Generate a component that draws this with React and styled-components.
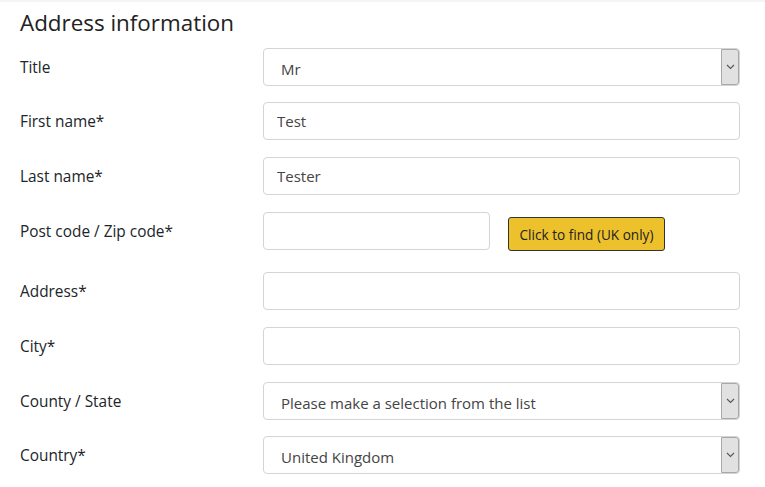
import React from 'react'
import styled, { createGlobalStyle } from 'styled-components'

const GlobalStyle = createGlobalStyle`
  body {
    margin: 0;
    background: #fff;
    font-family: "Open Sans", "Noto Sans", sans-serif;
    color: #212529;
  }
`

const rows = [
  { label: 'Title', kind: 'select', value: 'Mr', step: 54 },
  { label: 'First name*', kind: 'input', value: 'Test', step: 55 },
  { label: 'Last name*', kind: 'input', value: 'Tester', step: 55 },
  { label: 'Post code / Zip code*', kind: 'postcode', value: '', step: 60 },
  { label: 'Address*', kind: 'input', value: '', step: 55 },
  { label: 'City*', kind: 'input', value: '', step: 55 },
  { label: 'County / State', kind: 'select', value: 'Please make a selection from the list', step: 54 },
  { label: 'Country*', kind: 'select', value: 'United Kingdom', step: 50 },
]

function Field({ row }) {
  if (row.kind === 'select') {
    return (
      <SelectBox>
        <SelectText>{row.value}</SelectText>
        <Arrow>
          <svg width="9" height="6" viewBox="0 0 9 6">
            <path d="M1 1l3.5 3.5L8 1" fill="none" stroke="#555" strokeWidth="1.1" />
          </svg>
        </Arrow>
      </SelectBox>
    )
  }
  if (row.kind === 'postcode') {
    return (
      <PostWrap>
        <Input short defaultValue="" />
        <FindButton>Click to find (UK only)</FindButton>
      </PostWrap>
    )
  }
  return <Input defaultValue={row.value} />
}

export default function App() {
  return (
    <Page>
      <GlobalStyle />
      <Heading>Address information</Heading>
      <Form>
        {rows.map((row) => (
          <Row key={row.label} step={row.step}>
            <Label>{row.label}</Label>
            <Field row={row} />
          </Row>
        ))}
      </Form>
    </Page>
  )
}

const Page = styled.div`
  border-top: 2px solid #f4f4f4;
  padding: 0 25px 0 20px;
`

const Heading = styled.h2`
  margin: 0;
  padding-top: 6px;
  font-size: 22.4px;
  font-weight: 400;
  line-height: 30px;
  color: #222;
`

const Form = styled.div`
  display: flex;
  flex-direction: column;
  padding-top: 10px;
`

const Row = styled.div`
  display: grid;
  grid-template-columns: 243px 1fr;
  align-items: start;
  height: ${props => props.step}px;
`

const Label = styled.label`
  font-size: 15.4px;
  line-height: 20px;
  padding-top: 10px;
  color: #212529;
`

const Input = styled.input`
  box-sizing: border-box;
  width: ${props => props.short ? '227px' : '100%'};
  height: 38px;
  border: 1px solid #d4d4d4;
  border-radius: 4px;
  padding: 0 13px;
  font-family: inherit;
  font-size: 15px;
  color: #444;
  outline: none;
`

const PostWrap = styled.div`
  display: flex;
  align-items: flex-start;
  gap: 18px;
`

const FindButton = styled.button`
  margin-top: 5px;
  height: 34px;
  width: 157px;
  padding: 0;
  background: #edc12b;
  border: 1px solid #333;
  border-radius: 3px;
  font-family: inherit;
  font-size: 13.6px;
  color: #222;
`

const SelectBox = styled.div`
  position: relative;
  box-sizing: border-box;
  height: 38px;
  border: 1px solid #d4d4d4;
  border-radius: 4px;
  display: flex;
  align-items: center;
  padding-left: 17px;
`

const SelectText = styled.span`
  font-size: 15px;
  color: #444;
  padding-top: 3px;
`

const Arrow = styled.span`
  position: absolute;
  top: 0;
  right: 0;
  bottom: 0;
  width: 16px;
  background: #e1e1e1;
  border: 1px solid #a8a8a8;
  border-radius: 0 3px 3px 0;
  display: flex;
  align-items: center;
  justify-content: center;
`
